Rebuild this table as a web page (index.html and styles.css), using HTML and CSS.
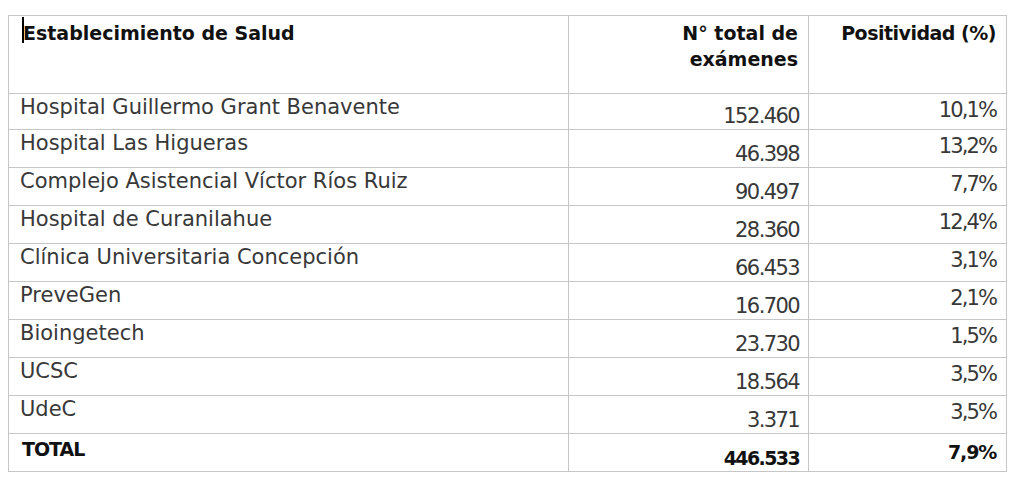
FILE: index.html
```html
<!DOCTYPE html>
<html lang="es">
<head>
<meta charset="utf-8">
<title>Exámenes por establecimiento</title>
<link rel="stylesheet" href="styles.css">
</head>
<body>
<table class="tabla">
  <colgroup>
    <col class="c-nombre">
    <col class="c-total">
    <col class="c-pos">
  </colgroup>
  <thead>
    <tr class="fila-head">
      <th class="h-nombre"><span class="caret"></span>Establecimiento de Salud</th>
      <th class="h-total">N° total de<br>exámenes</th>
      <th class="h-pos">Positividad (%)</th>
    </tr>
  </thead>
  <tbody>
    <tr class="fila primera"><td class="nombre">Hospital Guillermo Grant Benavente</td><td class="total">152.460</td><td class="pos">10,1%</td></tr>
    <tr class="fila"><td class="nombre">Hospital Las Higueras</td><td class="total">46.398</td><td class="pos">13,2%</td></tr>
    <tr class="fila"><td class="nombre">Complejo Asistencial Víctor Ríos Ruiz</td><td class="total">90.497</td><td class="pos">7,7%</td></tr>
    <tr class="fila"><td class="nombre">Hospital de Curanilahue</td><td class="total">28.360</td><td class="pos">12,4%</td></tr>
    <tr class="fila"><td class="nombre">Clínica Universitaria Concepción</td><td class="total">66.453</td><td class="pos">3,1%</td></tr>
    <tr class="fila"><td class="nombre">PreveGen</td><td class="total">16.700</td><td class="pos">2,1%</td></tr>
    <tr class="fila"><td class="nombre">Bioingetech</td><td class="total">23.730</td><td class="pos">1,5%</td></tr>
    <tr class="fila"><td class="nombre">UCSC</td><td class="total">18.564</td><td class="pos">3,5%</td></tr>
    <tr class="fila"><td class="nombre">UdeC</td><td class="total">3.371</td><td class="pos">3,5%</td></tr>
    <tr class="fila fila-total"><td class="nombre">TOTAL</td><td class="total">446.533</td><td class="pos">7,9%</td></tr>
  </tbody>
</table>
</body>
</html>
```

FILE: styles.css
```css
html, body {
  margin: 0;
  padding: 0;
  background: #ffffff;
}

body {
  padding: 15px 0 0 8px;
  font-family: "DejaVu Sans", "Liberation Sans", sans-serif;
  font-size: 21px;
  line-height: 26px;
  color: #383838;
}

.tabla {
  border-collapse: collapse;
  table-layout: fixed;
  width: 998px;
}

.c-nombre { width: 560px; }
.c-total { width: 240px; }
.c-pos { width: 198px; }

.tabla .cell-base,
.tabla th,
.tabla td {
  border: 1px solid #c6c6c6;
}

.fila-head { height: 78px; }
.fila { height: 38px; }
.fila.primera { height: 36px; }

/* header */
.tabla .h-nombre,
.tabla .h-total,
.tabla .h-pos {
  font-size: 19px;
  font-weight: bold;
  color: #111111;
  vertical-align: top;
  padding: 4px 0 0 0;
}

.tabla .h-nombre {
  text-align: left;
  padding-left: 13px;
}

.caret {
  display: inline-block;
  width: 2px;
  height: 26px;
  background: #000000;
  vertical-align: top;
  margin: -3px -1px 0 0;
}

.tabla .h-total {
  text-align: right;
  padding-right: 10px;
}

.tabla .h-pos {
  text-align: right;
  padding-right: 10px;
  letter-spacing: -0.5px;
}

/* body cells */
.tabla .nombre {
  vertical-align: top;
  text-align: left;
  padding: 0 0 0 11px;
}

.tabla .total {
  vertical-align: bottom;
  text-align: right;
  padding: 0 9px 0 0;
  letter-spacing: -1.6px;
}

.tabla .pos {
  vertical-align: top;
  text-align: right;
  padding: 3px 10px 0 0;
  letter-spacing: -1.9px;
}

/* total row */
.fila-total td {
  font-size: 19px;
  font-weight: bold;
  color: #111111;
}

.tabla .fila-total .nombre {
  padding-top: 2px;
  padding-left: 13px;
  letter-spacing: -1px;
}

.tabla .fila-total .total {
  letter-spacing: -1.6px;
}

.tabla .fila-total .pos {
  padding-top: 5px;
  letter-spacing: -1.2px;
}
```
